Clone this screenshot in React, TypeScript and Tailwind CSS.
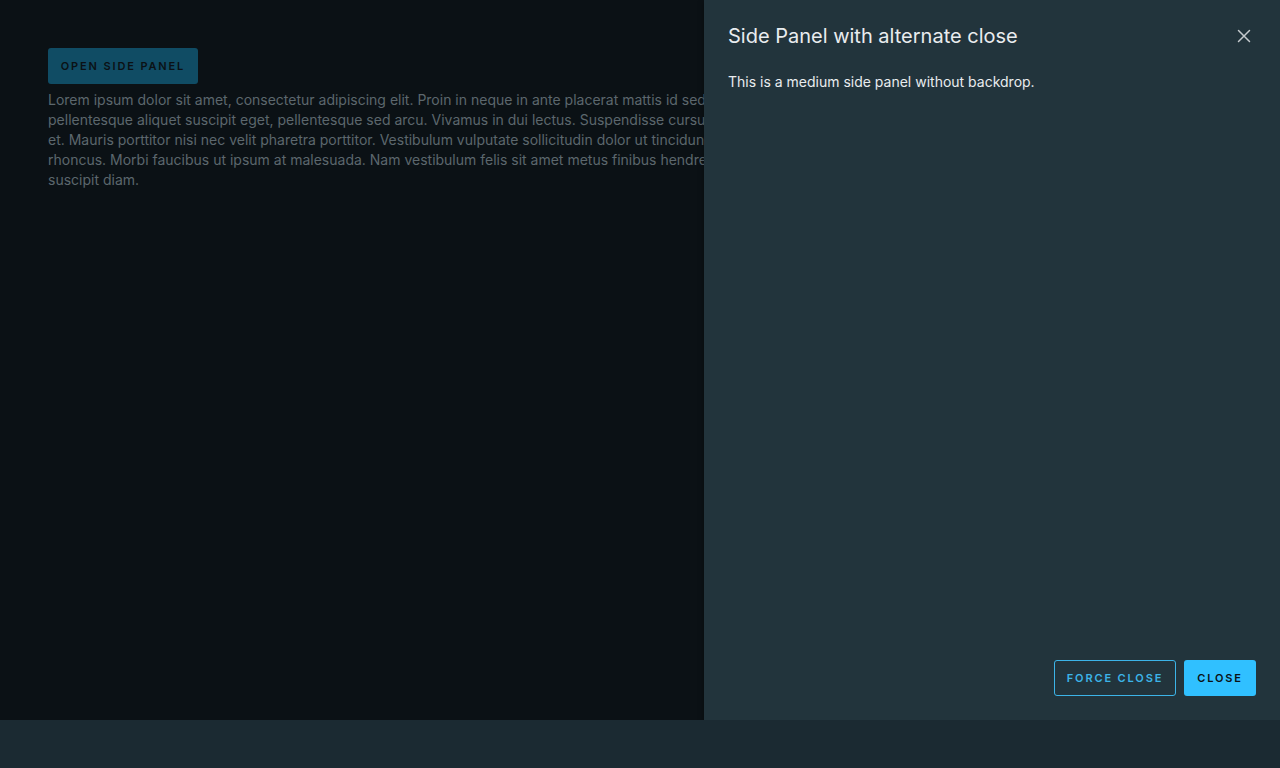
const lorem = [
  "Lorem ipsum dolor sit amet, consectetur adipiscing elit. Proin in neque in ante placerat mattis id sed quam. Proin rhoncus lacus et tempor dignissim. Vivamus sem quam,",
  "pellentesque aliquet suscipit eget, pellentesque sed arcu. Vivamus in dui lectus. Suspendisse cursus est ac nisl imperdiet viverra. Aenean sagittis nibh lacus, in eleifend urna ultrices",
  "et. Mauris porttitor nisi nec velit pharetra porttitor. Vestibulum vulputate sollicitudin dolor ut tincidunt. Phasellus vitae blandit felis. Nullam posuere ipsum tincidunt velit pellentesque",
  "rhoncus. Morbi faucibus ut ipsum at malesuada. Nam vestibulum felis sit amet metus finibus hendrerit. Fusce faucibus odio eget ex vulputate rhoncus. Fusce nec aliquam leo, at",
  "suscipit diam.",
]

function CloseIcon() {
  return (
    <svg width="14" height="14" viewBox="0 0 14 14" fill="none" stroke="currentColor" strokeWidth="1.5" strokeLinecap="round">
      <path d="M1.5 1.5 L12.5 12.5 M12.5 1.5 L1.5 12.5" />
    </svg>
  )
}

export default function App() {
  return (
    <div className="w-[1280px] h-[768px] bg-[#1b2a32] flex flex-col overflow-hidden font-['Inter',sans-serif]">
      <div className="relative h-[720px] bg-[#0b1115] overflow-hidden">
        {/* page content */}
        <div className="pt-12 px-12">
          <button className="h-9 w-[150px] rounded-[3px] bg-[#104c64] text-[#0b1115] text-[11px] font-semibold tracking-[0.17em] uppercase">
            Open side panel
          </button>
          <div className="mt-1.5 text-[14px] leading-5 text-[#5c676d]">
            {lorem.map((line) => (
              <div key={line} className="whitespace-nowrap">{line}</div>
            ))}
          </div>
        </div>

        {/* side panel */}
        <aside className="absolute top-0 right-0 h-full w-[576px] bg-[#22343c] shadow-[0_2px_6px_rgba(0,0,0,0.35)] flex flex-col p-6">
          <div className="flex items-center justify-between h-6">
            <h2 className="text-[20px] leading-6 text-[#e9ecef] font-normal">Side Panel with alternate close</h2>
            <button className="w-6 h-6 flex items-center justify-center text-[#c5cacd]">
              <CloseIcon />
            </button>
          </div>
          <p className="mt-6 text-[14px] leading-5 text-[#e9ecef]">This is a medium side panel without backdrop.</p>
          <div className="mt-auto flex justify-end gap-2">
            <button className="h-9 w-[122px] rounded-[3px] border border-[#3cb4e8] text-[#3cb4e8] text-[11px] font-semibold tracking-[0.17em] uppercase">
              Force close
            </button>
            <button className="h-9 w-[72px] rounded-[3px] bg-[#30c0ff] text-[#0b1115] text-[11px] font-semibold tracking-[0.17em] uppercase">
              Close
            </button>
          </div>
        </aside>
      </div>
    </div>
  )
}
